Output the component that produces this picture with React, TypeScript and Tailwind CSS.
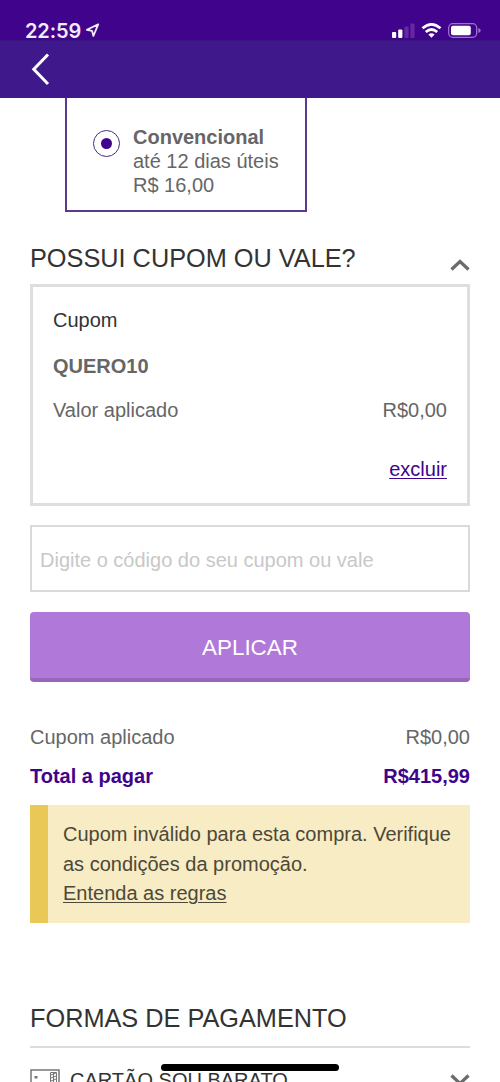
import type { ReactNode } from 'react';

interface RowProps {
  label: string;
  value: string;
  className?: string;
}

function Row({ label, value, className = '' }: RowProps) {
  return (
    <div className={`flex justify-between leading-6 ${className}`}>
      <span>{label}</span>
      <span>{value}</span>
    </div>
  );
}

function SectionTitle({ children }: { children: ReactNode }) {
  return (
    <h2 className="text-[25.3px] leading-[30px] text-[#333333] whitespace-nowrap">{children}</h2>
  );
}

function Chevron({ up = false }: { up?: boolean }) {
  return (
    <svg className="w-5 h-3 shrink-0" viewBox="0 0 20 12" fill="none" stroke="#6b6b6b" strokeWidth={3.2}>
      <path d={up ? 'M1.5 10.5L10 2.5L18.5 10.5' : 'M1.5 1.5L10 9.5L18.5 1.5'} />
    </svg>
  );
}

function StatusBar() {
  return (
    <div className="flex h-10 justify-between bg-[#40048c] pt-[18px] pl-[25px] pr-[19px]">
      {/* Hora + ubicación */}
      <div className="flex items-start">
        <span className="font-['Inter',sans-serif] text-[20px] leading-[26px] font-semibold text-[#f3eafa] w-[60px] tracking-[-0.1px]">22:59</span>
        <svg className="w-[15px] h-[15px] mt-[5px]" viewBox="0 0 15 15" fill="none" stroke="#f3eafa" strokeWidth={1.8} strokeLinejoin="round">
          <path d="M13.2 1.4L1.8 6.8L7 7.8L8.4 13Z" />
        </svg>
      </div>

      {/* Señal, wifi y batería */}
      <svg className="w-[90px] h-5 mt-[2px]" viewBox="0 0 90 20">
        <rect x="1" y="12" width="4.2" height="6" rx="1" fill="#ffffff" />
        <rect x="7.2" y="9.5" width="4.2" height="8.5" rx="1" fill="#ffffff" />
        <rect x="13.4" y="6.5" width="4.2" height="11.5" rx="1" fill="#6429a2" />
        <rect x="19.4" y="3.5" width="4.2" height="14.5" rx="1" fill="#6429a2" />
        <g fill="none" stroke="#ffffff" strokeWidth="2.7">
          <path d="M31.5 8.2Q40.5 0.4 49.5 8.2" />
          <path d="M34.8 12Q40.5 7 46.2 12" />
        </g>
        <path d="M37.4 14.4Q40.5 12 43.6 14.4L40.5 17.7Z" fill="#ffffff" />
        <rect x="57.7" y="3.7" width="28" height="13.6" rx="4" fill="none" stroke="#9a73c8" strokeWidth="1.3" />
        <rect x="60" y="5.7" width="19.8" height="9.6" rx="2" fill="#ffffff" />
        <path d="M87.4 8V13Q89.7 12.2 89.7 10.5Q89.7 8.8 87.4 8Z" fill="#9a73c8" />
      </svg>
    </div>
  );
}

export default function App() {
  return (
    <div className="relative w-[500px] h-[1082px] overflow-hidden bg-white font-['Liberation_Sans',Arial,sans-serif] text-[20px] text-[#666666]">
      <StatusBar />
      <header className="h-[58px] bg-[#3f188b] border-t border-[#3a1480] pt-3 pl-[31px]">
        <svg className="w-[19px] h-[34px]" viewBox="0 0 19 34" fill="none" stroke="#ffffff" strokeWidth={3}>
          <path d="M17 1.5L2.8 16.3L17 31" />
        </svg>
      </header>

      {/* Opción de envío */}
      <div className="ml-[65px] flex h-[114px] w-[242px] border-2 border-t-0 border-[#5b3a8c] pl-[26px] pt-[27px]">
        <div className="mt-[5px] flex h-[27px] w-[27px] items-center justify-center rounded-full border-[1.5px] border-[#4b2a85]">
          <div className="h-[11px] w-[11px] rounded-full bg-[#40048c]" />
        </div>
        <div className="ml-[13px] leading-6">
          <p className="font-bold">Convencional</p>
          <p>até 12 dias úteis</p>
          <p>R$ 16,00</p>
        </div>
      </div>

      <main className="px-[30px] pt-[31px]">
        <div className="flex justify-between">
          <SectionTitle>POSSUI CUPOM OU VALE?</SectionTitle>
          <div className="mt-4">
            <Chevron up />
          </div>
        </div>

        {/* Cupón aplicado */}
        <section className="mt-[11px] h-[222px] border-[3px] border-[#dedede] px-5 pt-[21px] leading-6">
          <p className="text-[#333333]">Cupom</p>
          <p className="mt-[22px] font-bold">QUERO10</p>
          <Row label="Valor aplicado" value="R$0,00" className="mt-5" />
          <div className="mt-[35px] text-right">
            <a className="text-[#40048c] underline decoration-1 underline-offset-2">excluir</a>
          </div>
        </section>

        <input
          type="text"
          placeholder="Digite o código do seu cupom ou vale"
          className="mt-[19px] block h-[67px] w-full border-2 border-[#dadada] px-2 pt-[3px] placeholder:text-[#c8c8c8]"
        />
        <button className="mt-5 block h-[70px] w-full rounded-[4px] border-b-4 border-[#9865b8] bg-[#b078d8] pt-[5px] text-[22.4px] text-white">
          APLICAR
        </button>

        {/* Totales */}
        <Row label="Cupom aplicado" value="R$0,00" className="mt-[43px]" />
        <Row label="Total a pagar" value="R$415,99" className="mt-[15px] font-bold text-[#40048c]" />

        <div className="mt-[17px] h-[118px] border-l-[18px] border-[#e9c857] bg-[#f7ecc4] pl-[15px] pt-[15px] leading-[29.5px] text-[#4d4838] whitespace-nowrap">
          <p>Cupom inválido para esta compra. Verifique</p>
          <p>as condições da promoção.</p>
          <a className="underline decoration-1 underline-offset-2">Entenda as regras</a>
        </div>

        <div className="mt-20 border-b-2 border-[#dcdcdc] pb-[13px]">
          <SectionTitle>FORMAS DE PAGAMENTO</SectionTitle>
        </div>

        {/* Forma de pago */}
        <div className="mt-5 flex h-6 text-[#333333]">
          <svg className="mt-px h-5 w-[30px]" viewBox="0 0 30 20" fill="none" stroke="#777777">
            <rect x="1" y="1" width="28" height="18" strokeWidth="1.5" />
            <rect x="4.5" y="7" width="3" height="2.5" fill="#777777" stroke="none" />
            <path d="M20.5 3.5H26.5V17H20.5ZM21 6L26 4M21 9L26 7M21 12L26 10M23.5 4V16" />
          </svg>
          <span className="ml-[10px] flex-1 leading-6">CARTÃO SOU BARATO</span>
          <div className="mt-[6px]">
            <Chevron />
          </div>
        </div>
      </main>

      {/* Indicador de inicio */}
      <div className="absolute bottom-[11px] left-[161px] h-[7px] w-[178px] rounded-full bg-black" />
    </div>
  );
}
